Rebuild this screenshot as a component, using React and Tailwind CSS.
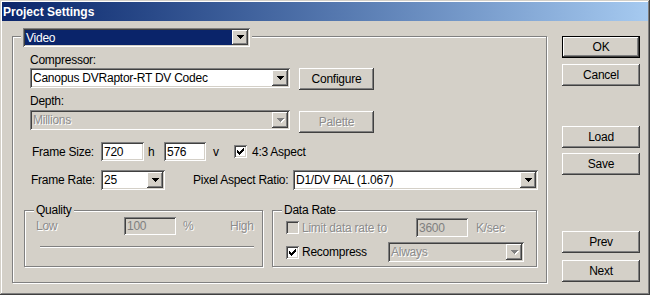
import React from "react";

const RAISED =
  "shadow-[inset_-1px_-1px_0_0_#404040,inset_1px_1px_0_0_#ffffff,inset_-2px_-2px_0_0_#808080,inset_2px_2px_0_0_#d4d0c8]";
const SUNKEN =
  "shadow-[inset_1px_1px_0_0_#808080,inset_-1px_-1px_0_0_#ffffff,inset_2px_2px_0_0_#404040,inset_-2px_-2px_0_0_#d4d0c8]";
const ETCHED =
  "border border-[#808080] shadow-[1px_1px_0_0_#ffffff,inset_1px_1px_0_0_#ffffff]";
const DIS = "text-[#8c8c8c] [text-shadow:1px_1px_0_#ffffff]";

function Arrow({ disabled }) {
  const d = "M0 0h7v1h-7z M1 1h5v1h-5z M2 2h3v1h-3z M3 3h1v1h-1z";
  return (
    <svg width="8" height="5" viewBox="0 0 8 5" shapeRendering="crispEdges" className="ml-[1px]">
      {disabled && <path d={d} fill="#ffffff" transform="translate(1 1)" />}
      <path d={d} fill={disabled ? "#808080" : "#000000"} />
    </svg>
  );
}

function Combo({ value, disabled, selected, className = "", h = "h-[20px]" }) {
  return (
    <div
      className={`${SUNKEN} ${h} p-[2px] flex shrink-0 ${
        disabled ? "bg-[#d4d0c8]" : "bg-white"
      } ${className}`}
    >
      <div
        className={`flex-1 min-w-0 flex items-center pl-[1px] whitespace-nowrap overflow-hidden ${
          selected ? "bg-[#0a246a] text-white" : ""
        } ${disabled ? DIS : ""}`}
      >
        {value}
      </div>
      <div
        className={`w-[16px] h-full shrink-0 bg-[#d4d0c8] ${RAISED} flex items-center justify-center`}
      >
        <Arrow disabled={disabled} />
      </div>
    </div>
  );
}

function Field({ value, disabled, className = "" }) {
  return (
    <div
      className={`${SUNKEN} p-[2px] flex items-center shrink-0 ${
        disabled ? "bg-[#d4d0c8] text-[#808080]" : "bg-white"
      } ${className}`}
    >
      <span className="pl-[1px]">{value}</span>
    </div>
  );
}

function Check({ checked, disabled }) {
  return (
    <div
      className={`w-[13px] h-[13px] shrink-0 ${SUNKEN} ${
        disabled ? "bg-[#d4d0c8]" : "bg-white"
      }`}
    >
      {checked && (
        <svg width="13" height="13" viewBox="0 0 13 13" shapeRendering="crispEdges">
          <path
            d="M3 5h1v3h-1z M4 6h1v3h-1z M5 7h1v3h-1z M6 6h1v3h-1z M7 5h1v3h-1z M8 4h1v3h-1z M9 3h1v3h-1z"
            fill="#000000"
          />
        </svg>
      )}
    </div>
  );
}

function Btn({ children, className = "", disabled, isDefault }) {
  return (
    <div
      className={`h-[22px] shrink-0 flex items-center justify-center bg-[#d4d0c8] ${RAISED} ${
        isDefault ? "border border-black" : ""
      } ${disabled ? DIS : ""} ${className}`}
    >
      {children}
    </div>
  );
}

function Group({ title, className = "", children }) {
  return (
    <div className={`relative shrink-0 ${ETCHED} ${className}`}>
      {children}
      <div className="absolute z-10 left-[9px] top-[-8px] px-[2px] bg-[#d4d0c8] leading-[14px] text-black">
        {title}
      </div>
    </div>
  );
}

export default function App() {
  return (
    <div
      className={`w-[650px] h-[295px] bg-[#d4d0c8] font-['Liberation_Sans',Arial,sans-serif] text-[12px] tracking-[-0.25px] text-black flex flex-col pt-[2px] px-[2px] overflow-hidden shadow-[inset_-1px_-1px_0_0_#404040,inset_1px_1px_0_0_#d4d0c8,inset_-2px_-2px_0_0_#808080,inset_2px_2px_0_0_#ffffff]`}
    >
      <div className="h-[19px] shrink-0 bg-linear-to-r from-[#0a246a] to-[#a6caf0] flex pl-[1px] pt-[2px]">
        <span className="font-bold text-white leading-[17px] tracking-normal">
          Project Settings
        </span>
      </div>

      <div className="flex pt-[15px] pl-[10px]">
        <div className={`relative w-[535px] h-[247px] shrink-0 ${ETCHED}`}>
          <div className="absolute left-[8px] top-[-9px] px-[2px] bg-[#d4d0c8]">
            <Combo className="w-[227px]" h="h-[19px]" value="Video" selected />
          </div>

          <div className="flex flex-col">
            <div className="ml-[17px] mt-[16px] leading-[14px]">Compressor:</div>
            <div className="ml-[17px] mt-[1px] flex items-start">
              <Combo className="w-[260px]" value="Canopus DVRaptor-RT DV Codec" />
              <Btn className="ml-[9px] w-[75px]">Configure</Btn>
            </div>

            <div className="ml-[17px] mt-[4px] leading-[14px]">Depth:</div>
            <div className="ml-[17px] mt-[2px] flex items-start">
              <Combo className="w-[260px]" value="Millions" disabled />
              <Btn className="ml-[9px] mt-[1px] w-[75px]" disabled>
                Palette
              </Btn>
            </div>

            <div className="ml-[19px] mt-[9px] h-[19px] flex items-center">
              <span className="w-[69px] shrink-0">Frame Size:</span>
              <Field className="w-[43px] h-[19px]" value="720" />
              <span className="w-[20px] pl-[4px] shrink-0">h</span>
              <Field className="w-[42px] h-[19px]" value="576" />
              <span className="w-[28px] pl-[7px] shrink-0">v</span>
              <Check checked />
              <span className="ml-[5px]">4:3 Aspect</span>
            </div>

            <div className="ml-[18px] mt-[9px] h-[20px] flex items-center">
              <span className="w-[70px] shrink-0">Frame Rate:</span>
              <Combo className="w-[64px]" value="25" />
              <span className="ml-[28px] w-[100px] shrink-0 whitespace-nowrap">
                Pixel Aspect Ratio:
              </span>
              <Combo className="w-[245px]" value="D1/DV PAL (1.067)" />
            </div>

            <div className="ml-[11px] mt-[20px] flex">
              <Group title="Quality" className="w-[239px] h-[57px]">
                <div className="ml-[11px] mt-[6px] h-[18px] flex items-center">
                  <span className={`w-[88px] shrink-0 ${DIS}`}>Low</span>
                  <Field className="w-[52px] h-[18px]" value="100" disabled />
                  <span className={`w-[54px] pl-[7px] shrink-0 ${DIS}`}>%</span>
                  <span className={DIS}>High</span>
                </div>
                <div className="ml-[15px] mt-[11px] w-[214px] h-[2px] border-t border-t-[#808080] border-b border-b-white" />
              </Group>

              <Group title="Data Rate" className="ml-[9px] w-[265px] h-[57px]">
                <div className="ml-[13px] mt-[7px] h-[19px] flex items-center">
                  <Check disabled />
                  <span className={`ml-[3px] w-[114px] shrink-0 ${DIS}`}>
                    Limit data rate to
                  </span>
                  <Field className="w-[52px] h-[19px]" value="3600" disabled />
                  <span className={`ml-[8px] ${DIS}`}>K/sec</span>
                </div>
                <div className="ml-[13px] mt-[5px] h-[20px] flex items-center">
                  <Check checked />
                  <span className="ml-[3px] w-[86px] shrink-0">Recompress</span>
                  <Combo className="w-[136px]" value="Always" disabled />
                </div>
              </Group>
            </div>
          </div>
        </div>

        <div className="ml-[15px] flex flex-col w-[78px] shrink-0">
          <Btn isDefault>OK</Btn>
          <Btn className="mt-[6px]">Cancel</Btn>
          <Btn className="mt-[40px]">Load</Btn>
          <Btn className="mt-[5px]">Save</Btn>
          <Btn className="mt-[56px]">Prev</Btn>
          <Btn className="mt-[7px]">Next</Btn>
        </div>
      </div>
    </div>
  );
}
